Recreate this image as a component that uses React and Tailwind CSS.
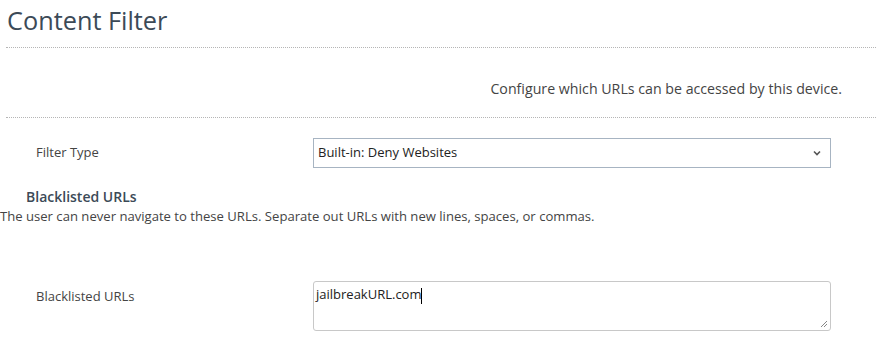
export default function App() {
  return (
    <div className="w-[876px] h-[362px] bg-white overflow-hidden text-[#333] [font-family:'Open_Sans',sans-serif]">
      <div className="pl-[6px]">
        <h1 className="text-[25.3px] leading-[36px] pt-[2px] pl-[1px] text-[#3c4a57] font-normal">Content Filter</h1>
        <div className="mt-[9px] border-t border-dotted border-[#b5b5b5]" />
        <div className="h-[69px] flex items-center justify-end pr-[34px] pt-[13px] text-[14.2px] text-[#444]">
          Configure which URLs can be accessed by this device.
        </div>
        <div className="border-t border-dotted border-[#b5b5b5]" />
      </div>
      <div className="mt-[20px] flex items-center">
        <div className="w-[313px] pl-[36px] text-[13px] text-[#444]">Filter Type</div>
        <div className="w-[518px] h-[30px] border border-[#a7b4c2] flex items-center justify-between pl-[4px] pr-[8px] text-[13px] text-[#222]">
          <span>Built-in: Deny Websites</span>
          <svg width="8" height="6" viewBox="0 0 8 6" className="mr-[1px]"><path d="M1 1.5 L4 4.5 L7 1.5" fill="none" stroke="#555" strokeWidth="1.6" /></svg>
        </div>
      </div>
      <div className="mt-[19px] pl-[26px] text-[14px] font-semibold text-[#3c4a57] leading-[20px]">Blacklisted URLs</div>
      <div className="text-[13.1px] text-[#444] leading-[18px]">The user can never navigate to these URLs. Separate out URLs with new lines, spaces, or commas.</div>
      <div className="mt-[56px] flex items-start">
        <div className="w-[313px] pl-[36px] pt-[6px] text-[13px] text-[#444]">Blacklisted URLs</div>
        <div className="relative w-[518px] h-[50px] border border-[#c8c8c8] rounded-[3px] px-[2px] pt-[3px] text-[13px] text-[#222]">
          <span>jailbreakURL.com</span><span className="inline-block w-px h-[16px] bg-black align-middle" />
          <svg width="8" height="8" viewBox="0 0 8 8" className="absolute right-[2px] bottom-[2px]"><path d="M7 1 L1 7 M7 4 L4 7" stroke="#888" strokeWidth="1" /></svg>
        </div>
      </div>
    </div>
  );
}
